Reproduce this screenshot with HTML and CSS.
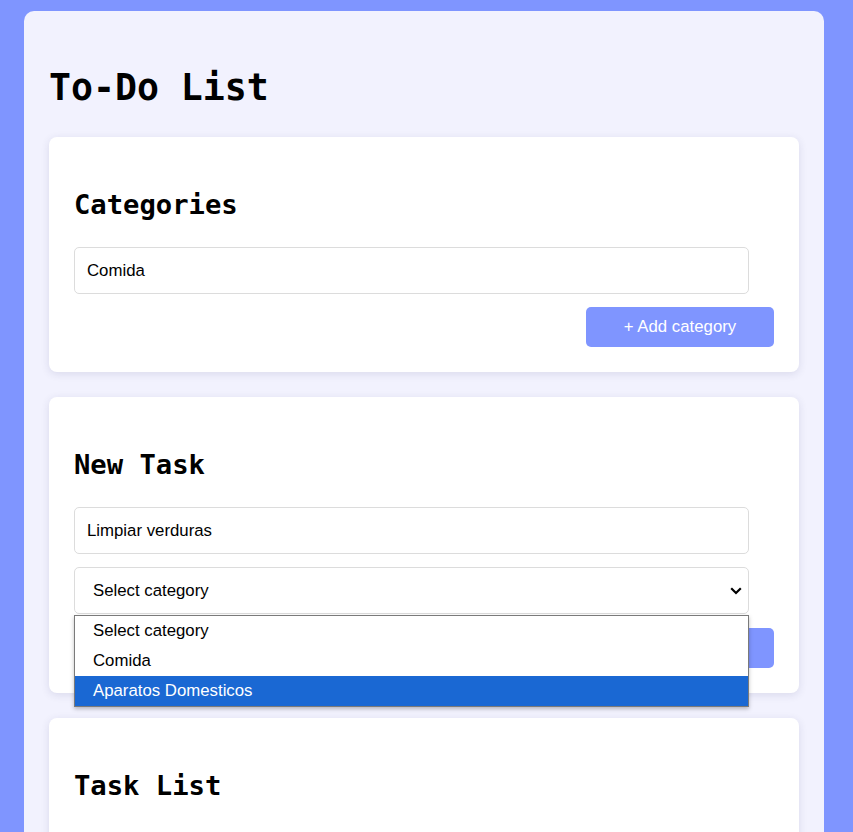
FILE: index.html
```html
<!DOCTYPE html>
<html lang="en">
<head>
<meta charset="utf-8">
<title>To-Do List</title>
<link rel="stylesheet" href="styles.css">
</head>
<body>
<main class="app">
  <h1 class="title">To-Do List</h1>

  <section class="card">
    <h2 class="card-title">Categories</h2>
    <div class="form">
      <div class="field">Comida</div>
      <button class="btn">+ Add category</button>
    </div>
  </section>

  <section class="card">
    <h2 class="card-title">New Task</h2>
    <div class="form">
      <div class="field">Limpiar verduras</div>
      <div class="select-wrap">
        <div class="field select">
          <span class="select-text">Select category</span>
          <svg class="chevron" width="12" height="8" viewBox="0 0 12 8"><path d="M1.2 1.3 L6 6 L10.8 1.3" fill="none" stroke="#000" stroke-width="2.2"/></svg>
        </div>
        <ul class="popup">
          <li class="option">Select category</li>
          <li class="option">Comida</li>
          <li class="option selected">Aparatos Domesticos</li>
        </ul>
      </div>
      <button class="btn btn-task">+ Add task</button>
    </div>
  </section>

  <section class="card">
    <h2 class="card-title">Task List</h2>
  </section>
</main>
</body>
</html>
```
FILE: styles.css
```css
html, body {
  margin: 0;
  padding: 0;
}
body {
  background: #7f95ff;
  padding: 11px 0 0 24px;
  font-family: "Liberation Sans", Arial, sans-serif;
  font-size: 16.8px;
  color: #000;
  height: 832px;
  box-sizing: border-box;
  overflow: hidden;
}
.app {
  width: 800px;
  box-sizing: border-box;
  background: #f2f2fe;
  border-radius: 10px;
  padding: 25px 25px 40px;
  min-height: 900px;
}
.title {
  font-family: "DejaVu Sans Mono", monospace;
  font-weight: bold;
  font-size: 36.5px;
  line-height: 42px;
  margin: 31px 0 28px;
}
.card {
  background: #fff;
  border-radius: 8px;
  padding: 25px;
  margin-bottom: 25px;
  box-shadow: 0 2px 8px rgba(40, 40, 100, 0.12);
}
.card-title {
  font-family: "DejaVu Sans Mono", monospace;
  font-weight: bold;
  font-size: 27.2px;
  line-height: 32px;
  margin: 27px 0 26px;
}
.form {
  display: flex;
  flex-direction: column;
  align-items: flex-start;
  gap: 13px;
}
.field {
  width: 675px;
  height: 47px;
  box-sizing: border-box;
  border: 1px solid #dcdcdc;
  border-radius: 5px;
  padding: 0 12px;
  display: flex;
  align-items: center;
  font-size: 16.8px;
  background: #fff;
}
.select-wrap {
  position: relative;
}
.select {
  padding: 0 6px 0 18px;
  justify-content: space-between;
}
.chevron {
  display: block;
}
.popup {
  position: absolute;
  top: 48px;
  left: 0;
  width: 675px;
  box-sizing: border-box;
  margin: 0;
  padding: 0;
  list-style: none;
  background: #fff;
  border: 1px solid #7a7a7a;
  box-shadow: 0 2px 4px rgba(0, 0, 0, 0.25);
  z-index: 2;
}
.option {
  height: 30px;
  line-height: 30px;
  padding-left: 18px;
  font-size: 16.8px;
}
.option.selected {
  background: #1a68d3;
  color: #fff;
}
.btn {
  align-self: flex-end;
  width: 188px;
  height: 40px;
  border: none;
  border-radius: 5px;
  background: #7f95ff;
  color: #fff;
  font-family: "Liberation Sans", Arial, sans-serif;
  font-size: 16.8px;
}
.btn-task {
  margin-top: 1px;
}
```
